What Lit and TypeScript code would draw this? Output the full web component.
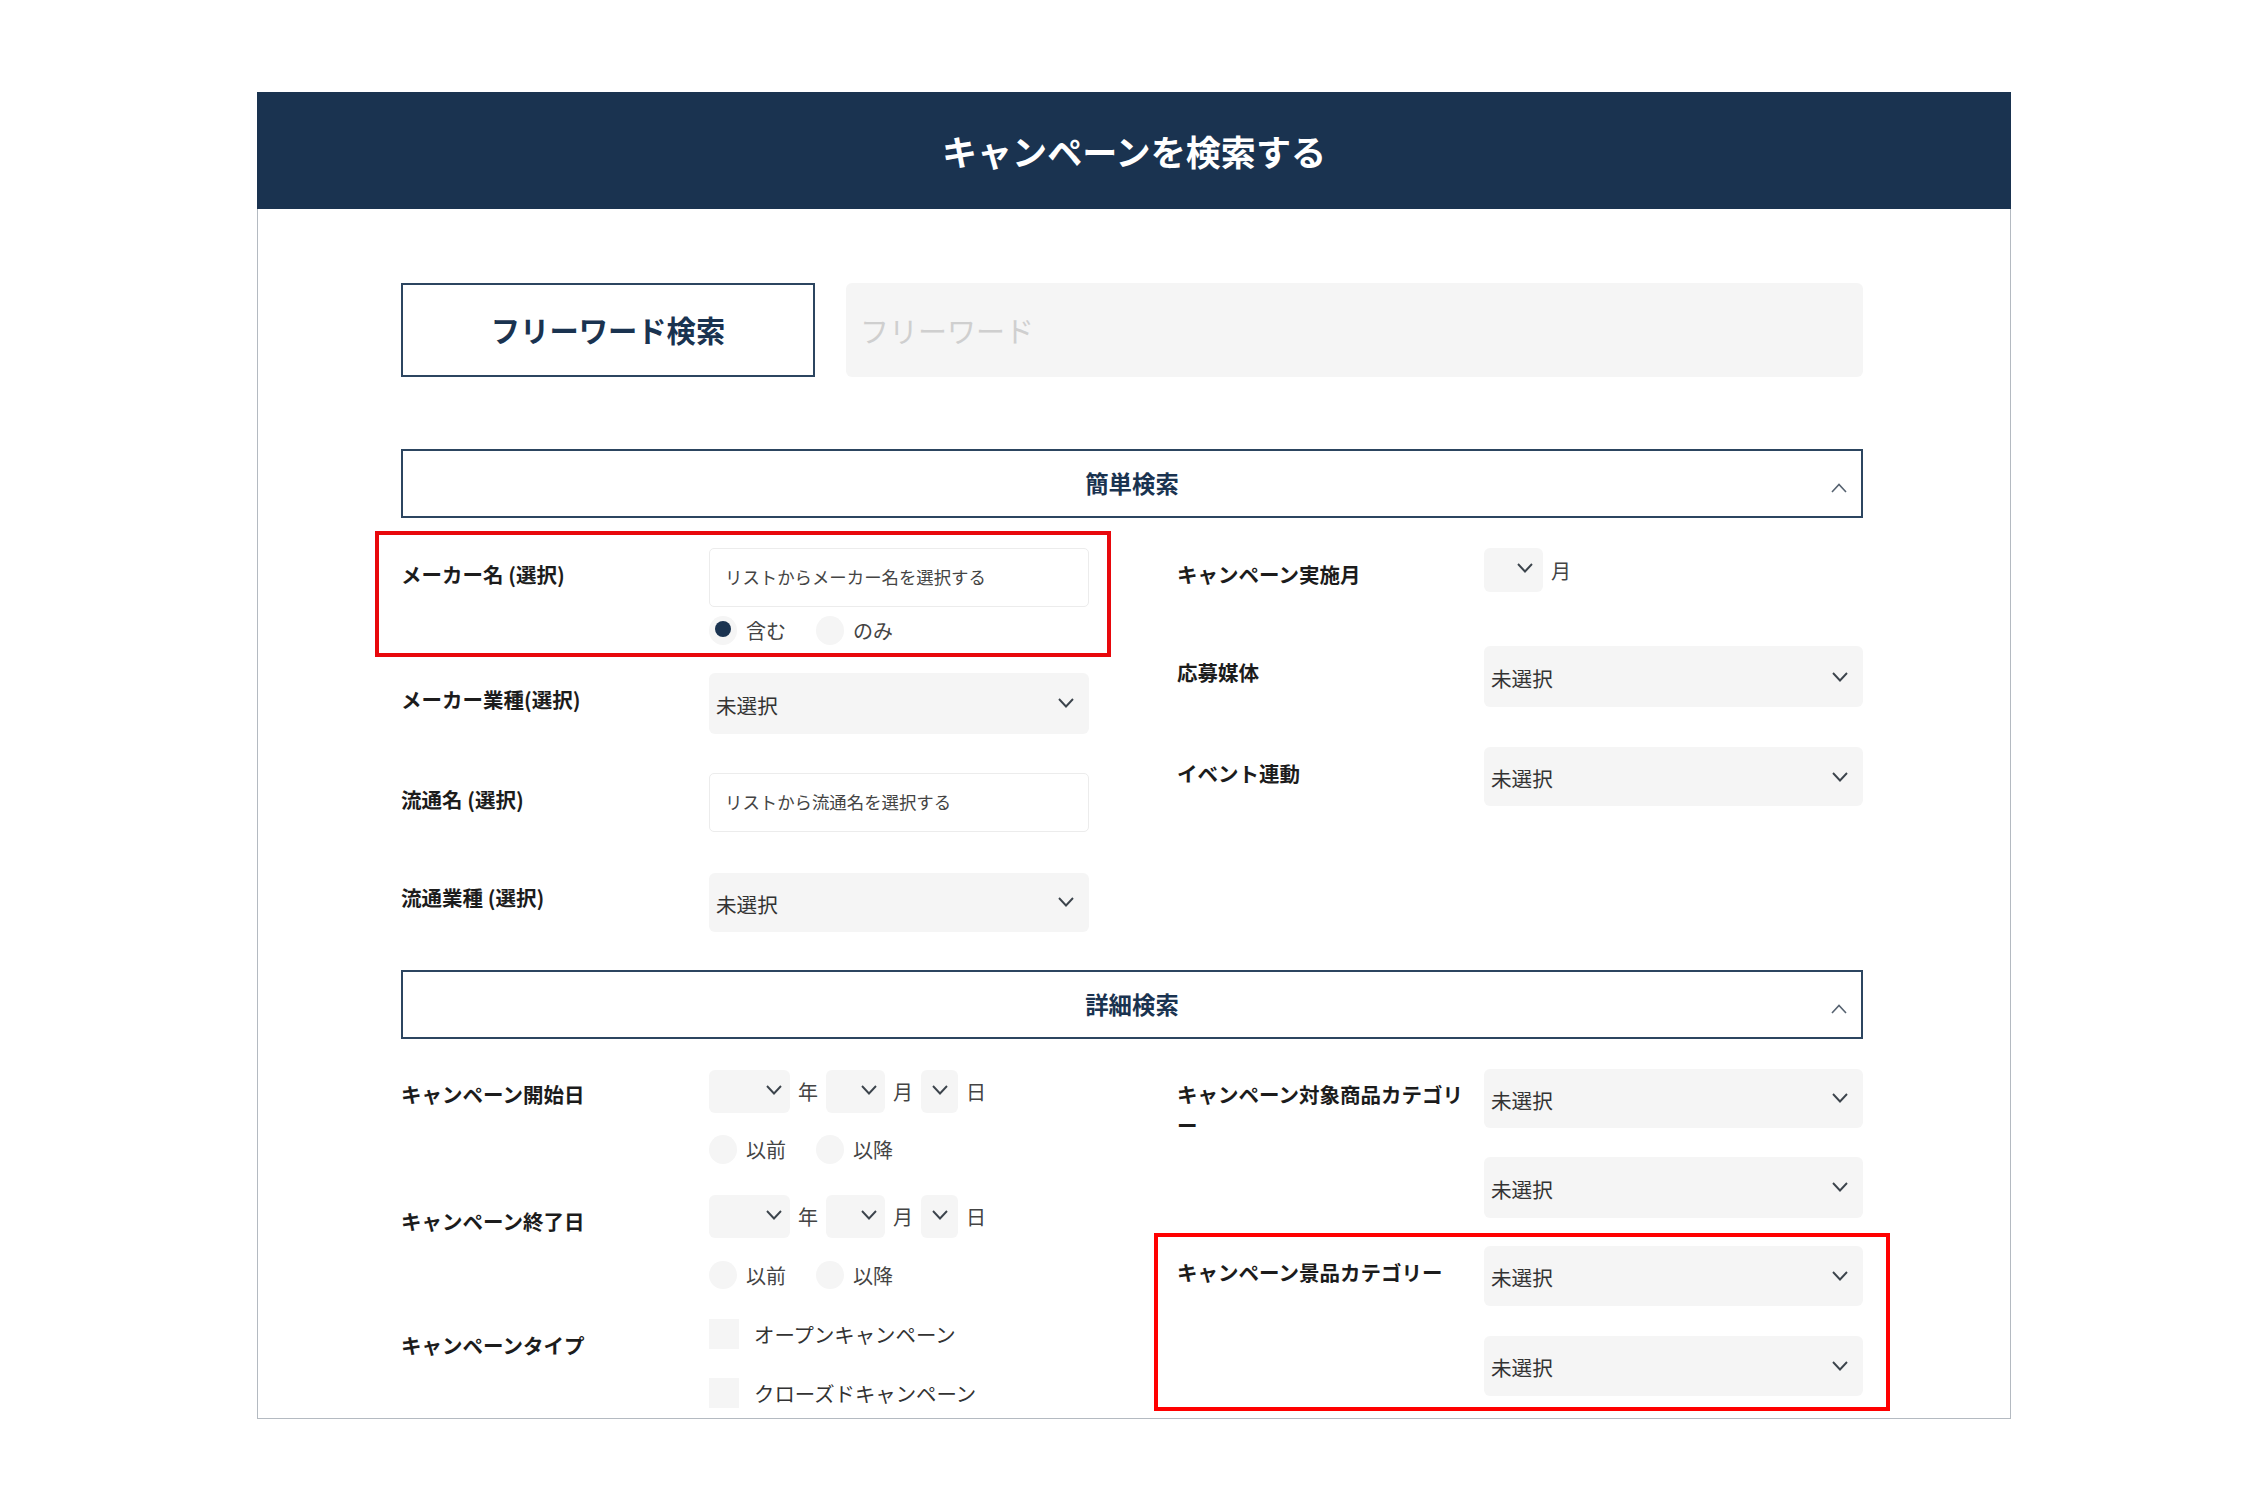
import { LitElement, html, css, svg } from "lit";
import { customElement } from "lit/decorators.js";

const chevronDown = svg`<svg class="chev" width="16" height="10" viewBox="0 0 16 10" fill="none"><polyline points="1,1 8,8.5 15,1" stroke="#3c444c" stroke-width="1.9"/></svg>`;
const chevronUp = svg`<svg class="chev-up" width="16" height="10" viewBox="0 0 16 10" fill="none"><polyline points="1,9 8,1.5 15,9" stroke="#566270" stroke-width="1.6"/></svg>`;

@customElement("app-root")
export class AppRoot extends LitElement {
  static styles = css`
    :host {
      display: block;
      padding: 92px 0 93px 257px;
      background: #fff;
      font-family: "Noto Sans CJK JP", "Noto Sans", sans-serif;
      color: #222;
    }
    * { box-sizing: border-box; }
    .panel { position: relative; width: 1754px; }
    .head {
      height: 117px;
      background: #1a3350;
      color: #fff;
      font-size: 35.1px;
      font-weight: 700;
      display: flex;
      align-items: center;
      justify-content: center;
    }
    .body {
      height: 1210px;
      overflow: hidden;
      border: 1px solid #b4bac1;
      border-top: 0;
      padding: 74px 147px 0 143px;
    }
    .free { display: flex; gap: 31px; height: 94px; }
    .free-label {
      width: 414px;
      border: 2px solid #2c4560;
      display: flex;
      align-items: center;
      justify-content: center;
      padding-bottom: 3px;
      font-size: 29.3px;
      font-weight: 700;
      color: #1a3350;
    }
    .free-input {
      flex: 1;
      background: #f5f5f5;
      border-radius: 6px;
      display: flex;
      align-items: center;
      padding: 0 0 0 14px;
      font-size: 29px;
      color: #cfcfcf;
    }
    .section {
      position: relative;
      height: 69px;
      border: 2px solid #2c4560;
      display: flex;
      align-items: center;
      justify-content: center;
      padding-bottom: 2px;
      font-size: 23.4px;
      font-weight: 700;
      color: #1a3350;
    }
    .section.first { margin-top: 72px; }
    .chev-up { position: absolute; right: 14px; top: 32px; }
    .grid { display: grid; grid-template-columns: 688px 686px; column-gap: 88px; padding-top: 30px; }
    .grid.simple { padding-bottom: 38.5px; }
    .grid.detail { padding-top: 31px; }
    .col { display: flex; flex-direction: column; }
    .col.up { margin-top: -1.5px; }
    .row { display: grid; grid-template-columns: 308px 1fr; }
    .col.right .row { grid-template-columns: 307px 1fr; }
    .label {
      font-size: 20.5px;
      font-weight: 700;
      line-height: 31px;
      padding: 11px 8px 0 0;
      color: #1c1c1c;
      line-break: anywhere;
    }
    .label.tight { padding-top: 9px; }
    .col.up .label.tight { padding-top: 10.5px; }
    .field { display: flex; flex-direction: column; }
    .input {
      height: 59px;
      background: #fff;
      border: 1.5px solid #ececec;
      border-radius: 5px;
      display: flex;
      align-items: center;
      padding: 0 0 2px 15px;
      font-size: 17.4px;
      color: #444;
    }
    .select {
      background: #f5f5f5;
      border-radius: 6px;
      display: flex;
      align-items: center;
      justify-content: space-between;
      padding: 0 15.5px 0 7px;
      font-size: 20.6px;
      color: #333;
    }
    .select .val { padding-top: 3px; }
    .h59 { height: 59px; }
    .h60 { height: 60px; }
    .h61 { height: 61px; }
    .date { display: flex; align-items: center; gap: 8px; font-size: 20px; color: #444; }
    .date .select { height: 43px; justify-content: flex-end; padding: 0 8px 3px 0; }
    .date .y { width: 81px; }
    .date .m { width: 59px; }
    .date .d { width: 37px; padding-right: 10px; }
    .date.tall .select { height: 44px; padding-right: 10px; padding-bottom: 4px; }
    .radios { display: flex; height: 28.5px; font-size: 20px; color: #444; }
    .radio { width: 107px; display: flex; align-items: center; gap: 9px; }
    .dot {
      width: 28px;
      height: 28.5px;
      border-radius: 50%;
      background: #f5f5f5;
      display: flex;
      align-items: center;
      justify-content: center;
    }
    .dot.on::after {
      content: "";
      width: 16px;
      height: 16px;
      border-radius: 50%;
      background: #1a3350;
      margin-top: -2px;
    }
    .radio span:last-child { padding-top: 1px; }
    .check { display: flex; align-items: flex-start; gap: 15px; height: 30px; font-size: 20.4px; color: #333; }
    .box { width: 30px; height: 30px; background: #f5f5f5; }
    .check .t { line-height: 30px; }
    .mt9 { margin-top: 9px; }
    .mt22 { margin-top: 22px; }
    .mt23 { margin-top: 23px; }
    .mt28 { margin-top: 28px; }
    .mt29 { margin-top: 29px; }
    .mt30 { margin-top: 30px; }
    .mt31 { margin-top: 31px; }
    .mt39 { margin-top: 39px; }
    .mt40 { margin-top: 40px; }
    .mt41 { margin-top: 41px; }
    .mt54 { margin-top: 54px; }
    .red {
      position: absolute;
      border: 4px solid #e8080c;
      pointer-events: none;
    }
    .red.a { left: 118px; top: 439px; width: 736px; height: 126px; }
    .red.b { left: 897px; top: 1141px; width: 736px; height: 178px; border-color: #f00; }
  `;

  private sel(cls: string) {
    return html`<div class="select ${cls}"><span class="val">未選択</span>${chevronDown}</div>`;
  }

  private date() {
    return html`<div class="date">
      <div class="select y">${chevronDown}</div><span>年</span>
      <div class="select m">${chevronDown}</div><span>月</span>
      <div class="select d">${chevronDown}</div><span>日</span>
    </div>`;
  }

  private radios(a: string, b: string, on = false, cls = "mt22") {
    return html`<div class="radios ${cls}">
      <label class="radio"><span class="dot ${on ? "on" : ""}"></span><span>${a}</span></label>
      <label class="radio"><span class="dot"></span><span>${b}</span></label>
    </div>`;
  }

  render() {
    return html`
      <div class="panel">
        <div class="head">キャンペーンを検索する</div>
        <div class="body">
          <div class="free">
            <div class="free-label">フリーワード検索</div>
            <div class="free-input">フリーワード</div>
          </div>

          <div class="section first">簡単検索${chevronUp}</div>
          <div class="grid simple">
            <div class="col">
              <div class="row">
                <div class="label">メーカー名 (選択)</div>
                <div class="field">
                  <div class="input">リストからメーカー名を選択する</div>
                  ${this.radios("含む", "のみ", true, "mt9")}
                </div>
              </div>
              <div class="row mt28">
                <div class="label">メーカー業種(選択)</div>
                <div class="field">${this.sel("h61")}</div>
              </div>
              <div class="row mt39">
                <div class="label">流通名 (選択)</div>
                <div class="field"><div class="input">リストから流通名を選択する</div></div>
              </div>
              <div class="row mt41">
                <div class="label tight">流通業種 (選択)</div>
                <div class="field">${this.sel("h59")}</div>
              </div>
            </div>
            <div class="col right">
              <div class="row">
                <div class="label">キャンペーン実施月</div>
                <div class="field">
                  <div class="date tall"><div class="select m">${chevronDown}</div><span>月</span></div>
                </div>
              </div>
              <div class="row mt54">
                <div class="label">応募媒体</div>
                <div class="field">${this.sel("h61")}</div>
              </div>
              <div class="row mt40">
                <div class="label">イベント連動</div>
                <div class="field">${this.sel("h59")}</div>
              </div>
            </div>
          </div>

          <div class="section">詳細検索${chevronUp}</div>
          <div class="grid detail">
            <div class="col">
              <div class="row">
                <div class="label tight">キャンペーン開始日</div>
                <div class="field">${this.date()}${this.radios("以前", "以降")}</div>
              </div>
              <div class="row mt31">
                <div class="label">キャンペーン終了日</div>
                <div class="field">${this.date()}${this.radios("以前", "以降", false, "mt23")}</div>
              </div>
              <div class="row mt30">
                <div class="label">キャンペーンタイプ</div>
                <div class="field">
                  <div class="check"><span class="box"></span><span class="t">オープンキャンペーン</span></div>
                  <div class="check mt29"><span class="box"></span><span class="t">クローズドキャンペーン</span></div>
                </div>
              </div>
            </div>
            <div class="col right up">
              <div class="row">
                <div class="label tight">キャンペーン対象商品カテゴリー</div>
                <div class="field">
                  ${this.sel("h59")}
                  ${this.sel("h61 mt29")}
                </div>
              </div>
              <div class="row mt28">
                <div class="label">キャンペーン景品カテゴリー</div>
                <div class="field">
                  ${this.sel("h60")}
                  ${this.sel("h60 mt30")}
                </div>
              </div>
            </div>
          </div>
        </div>
        <div class="red a"></div>
        <div class="red b"></div>
      </div>
    `;
  }
}
